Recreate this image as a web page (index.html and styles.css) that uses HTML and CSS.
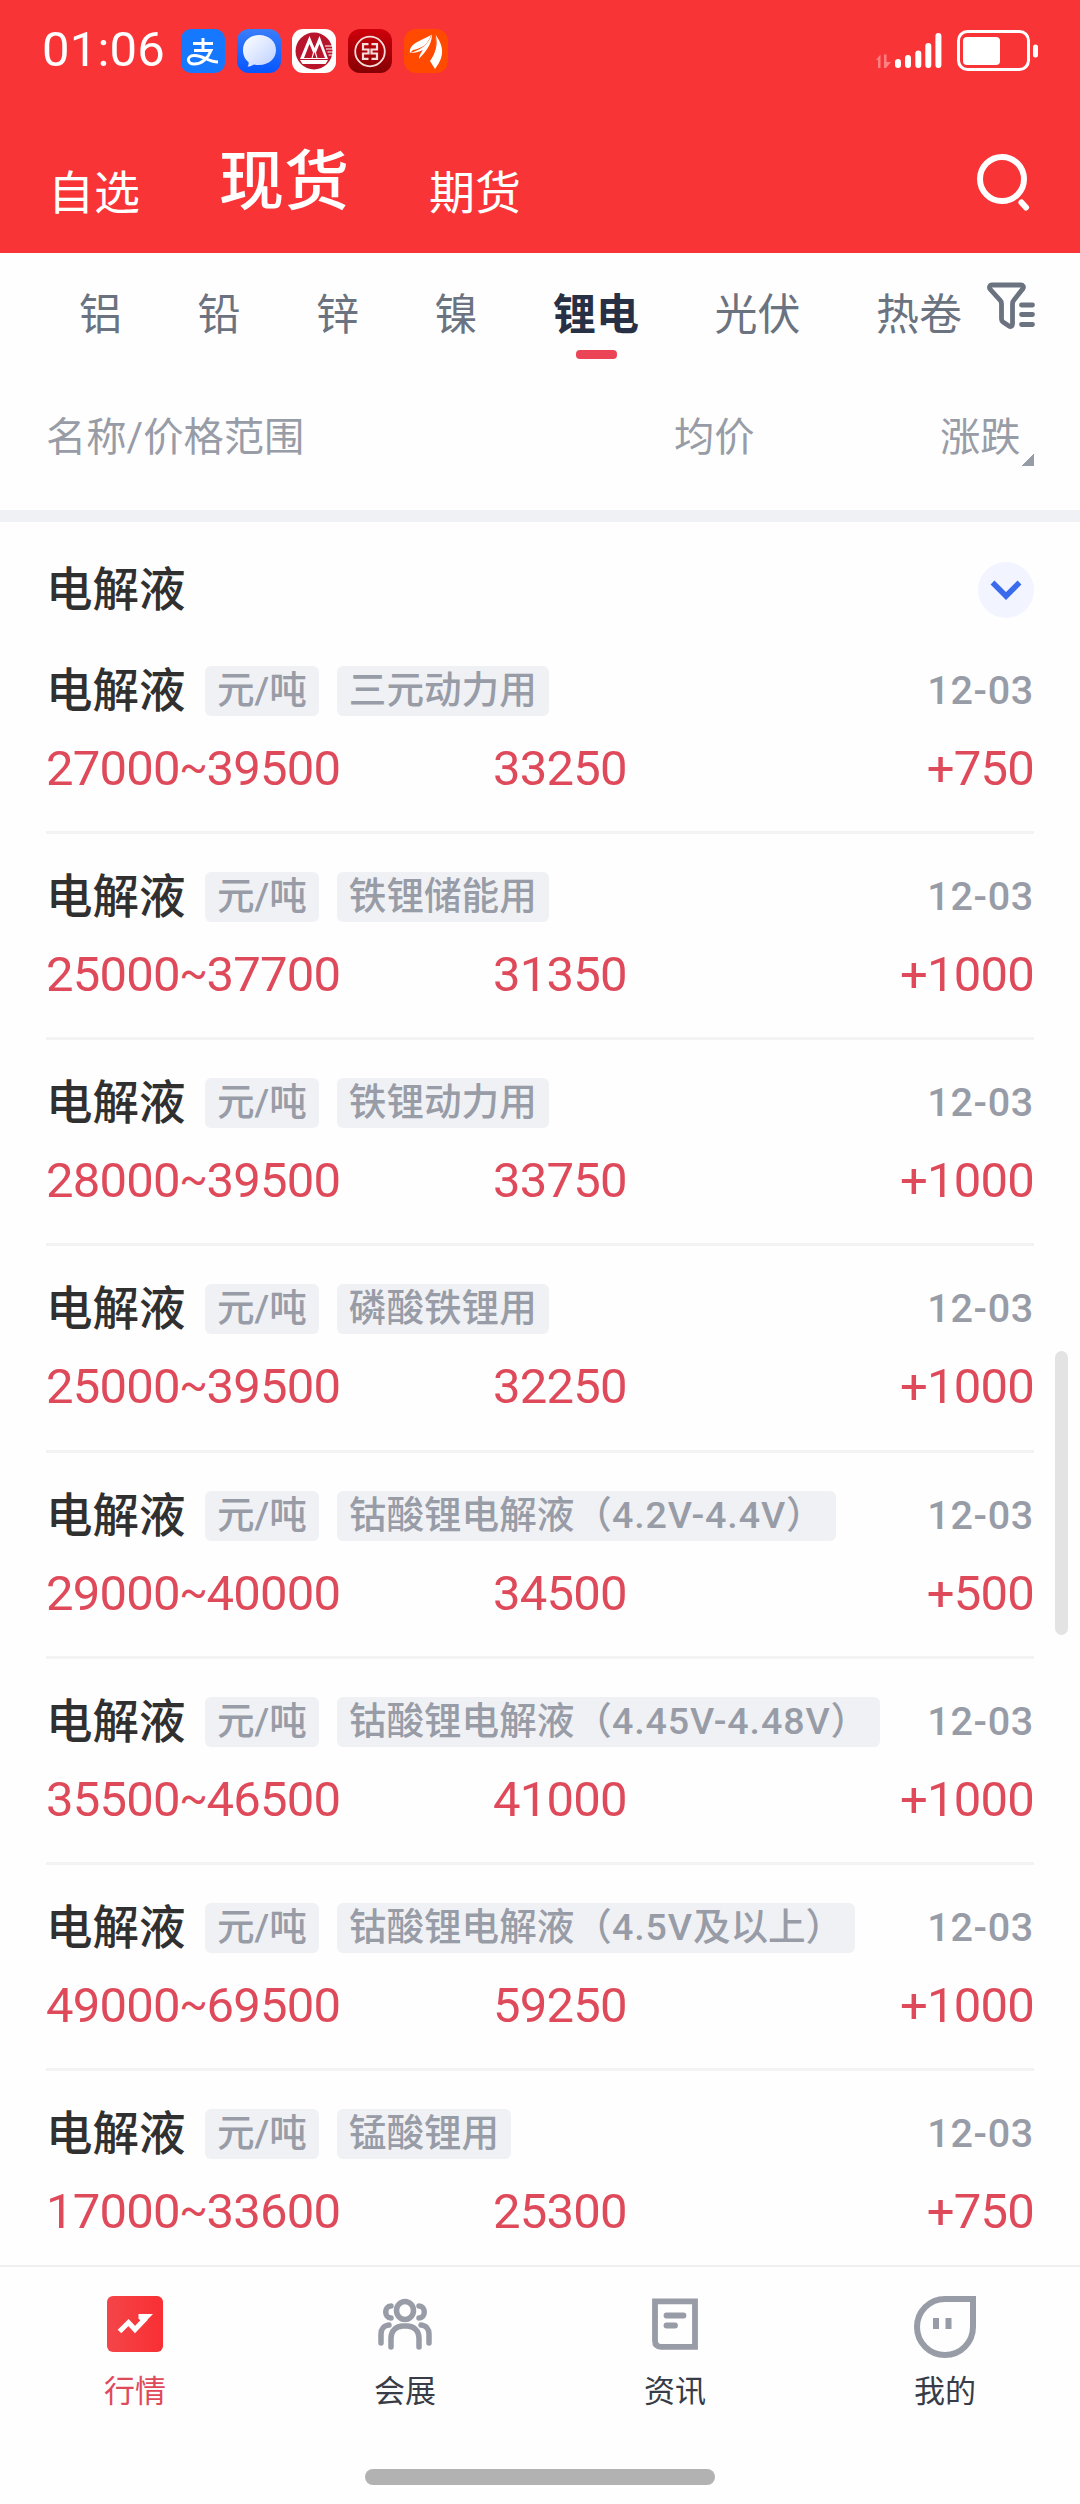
FILE: index.html
```html
<!DOCTYPE html>
<html lang="zh-CN">

<head>
    <meta charset="utf-8">
    <title>现货行情</title>
    <link rel="stylesheet" href="styles.css">
</head>

<body>
    <header class="header">
        <div class="status-bar">
            <span class="clock">01:06</span>
            <div class="notifications">
                <svg class="app-icon" viewBox="0 0 44 44">
                    <rect width="44" height="44" rx="10" fill="#1677ff" />
                    <path d="M12 14.500h20M22 9v12M13 21.500h17C27 29 21 35 13 35c-7 0-8-8 0-8.500C21 26 28 33 37 33" fill="none" stroke="#fff" stroke-width="3" />
                </svg>
                <svg class="app-icon" viewBox="0 0 44 44">
                    <defs>
                        <linearGradient id="msg-bg" x1="0" y1="0" x2="0" y2="1">
                            <stop offset="0" stop-color="#3a7df8" />
                            <stop offset="1" stop-color="#0556ff" />
                        </linearGradient>
                        <linearGradient id="msg-bubble" x1="0" y1="0" x2="1" y2="1">
                            <stop offset="0" stop-color="#fff" />
                            <stop offset="1" stop-color="#bccfff" />
                        </linearGradient>
                    </defs>
                    <rect width="44" height="44" rx="12" fill="url(#msg-bg)" />
                    <path d="M22 6c10 0 17 6.500 17 15s-7 15-17 15c-2 0-3.500-.3-5-.6-2 1.300-4 2-6.500 2.200 1-1.500 1.500-3 1-4.600C8 30.500 6 26 6 21 6 12.500 12.500 6 22 6z" fill="url(#msg-bubble)" />
                </svg>
                <svg class="app-icon" viewBox="0 0 44 44">
                    <rect width="44" height="44" rx="11" fill="#fff" />
                    <circle cx="22" cy="22" r="18.500" fill="#b8152c" />
                    <path d="M8 30 17.500 7l5 12 5-12L36 30z" fill="#fff" />
                    <path d="M17.500 15 12 29h7.500l1.500-5.500zM27.500 15 24 23.500l1.500 5.500H33zM22.500 23l-2 6h4z" fill="#b8152c" />
                    <path d="M8 31h28l-2.500 4h-23z" fill="#fff" />
                    <path d="M33 17h9M34 20h8M35.500 23h7M36.500 26h6" stroke="#fff" stroke-width="1.200" />
                </svg>
                <svg class="app-icon" viewBox="0 0 44 44">
                    <defs>
                        <linearGradient id="bank-bg" x1="0" y1="0" x2="0" y2="1">
                            <stop offset="0" stop-color="#cf000b" />
                            <stop offset="1" stop-color="#850004" />
                        </linearGradient>
                    </defs>
                    <rect width="44" height="44" rx="12" fill="url(#bank-bg)" />
                    <circle cx="22" cy="22.500" r="14.800" fill="none" stroke="#f7dcdc" stroke-width="1.800" />
                    <path d="M20.500 15.200H15v5.300h5.500v4H15v5.300h5.500M23.500 15.200H29v5.300h-5.500v4H29v5.300h-5.500" fill="none" stroke="#f7dcdc" stroke-width="2.200" />
                </svg>
                <svg class="app-icon" viewBox="0 0 44 44">
                    <rect width="44" height="44" rx="12" fill="#ff4a00" />
                    <path d="M6 24c-1-9 8-11 21-18-3 9-8 13-18 15z" fill="#fff" />
                    <path d="M6 24c11-3 18-8 22-19 0 11-7 18-13 25 0-4 2-6 4-9-4 2-8 3-13 3z" fill="#fff" />
                    <path d="M31 5c9 12 10 22 0 35l-5-8c6-8 7-16 5-27z" fill="#fff" />
                    <path d="M31 5c3 11 0 19-6 26" fill="none" stroke="#ff4a00" />
                </svg>
            </div>
            <svg class="signal" viewBox="0 0 66 44">
                <path d="M0 31l4.500-5.500V39H2V31zM8 25.500h2.500V33H15l-5 6H8z" fill="#ff7f82" />
                <path d="M22 33v3M32 29v7M42.300 24.500V36M52.300 17v19M62.400 7v29" stroke="#fff" stroke-width="6" stroke-linecap="round" />
            </svg>
            <svg class="battery" viewBox="0 0 82 42">
                <rect x="1.500" y="1.500" width="70" height="38" rx="9" fill="none" stroke="#fff" stroke-width="3" />
                <rect x="6" y="7" width="37" height="28" rx="4" fill="#fff" />
                <rect x="76" y="14.500" width="5" height="13" rx="2.500" fill="#fff" />
            </svg>
        </div>
        <nav class="market-nav">
            <a class="market">自选</a>
            <a class="market market-active">现货</a>
            <a class="market">期货</a>
            <svg class="search" viewBox="0 0 56 58">
                <circle cx="26" cy="26" r="22" fill="none" stroke="#fff" stroke-width="6" />
                <path d="M45.500 49.500l4.500 5" stroke="#fff" stroke-width="6" stroke-linecap="round" />
            </svg>
        </nav>
    </header>

    <nav class="metals">
        <a>铝</a>
        <a>铅</a>
        <a>锌</a>
        <a>镍</a>
        <a class="metal-active">锂电</a>
        <a>光伏</a>
        <a>热卷</a>
        <svg class="filter" viewBox="0 0 48 48">
            <path d="M5 3h29c2 0 3 2 2 3.500L27 18c-1 1-1.500 2-1.500 4v20c0 2.500-2 3-3.500 2l-6-4c-1-.7-1.500-1.500-1.500-3V22c0-2-.5-3-1.500-4L3 7C2 5.500 2.500 3 5 3z" fill="none" stroke="#6b7380" stroke-width="4.800" />
            <path d="M34.500 23h11M34.500 32.500h11M34.500 42.500h11" stroke="#6b7380" stroke-width="4.800" stroke-linecap="round" />
        </svg>
    </nav>

    <div class="columns">
        <span class="col-name">名称/价格范围</span>
        <span class="col-avg">均价</span>
        <span class="col-change">涨跌</span>
        <span class="sort-mark"></span>
    </div>

    <main class="list">
        <div class="group">
            <h2>电解液</h2>
            <svg class="collapse" viewBox="0 0 56 56">
                <circle cx="28" cy="28" r="28" fill="#f2f5ff" />
                <path d="M14.500 20.500 28 34l13.500-13.500" fill="none" stroke="#3a6bec" stroke-width="5.500" />
            </svg>
        </div>

        <section class="row">
            <div class="info"><h3>电解液</h3><span class="tag">元/吨</span><span class="tag">三元动力用</span><time>12-03</time></div>
            <div class="prices"><span class="range">27000<i>~</i>39500</span><span class="avg">33250</span><span class="change">+750</span></div>
        </section>
        <section class="row">
            <div class="info"><h3>电解液</h3><span class="tag">元/吨</span><span class="tag">铁锂储能用</span><time>12-03</time></div>
            <div class="prices"><span class="range">25000<i>~</i>37700</span><span class="avg">31350</span><span class="change">+1000</span></div>
        </section>
        <section class="row">
            <div class="info"><h3>电解液</h3><span class="tag">元/吨</span><span class="tag">铁锂动力用</span><time>12-03</time></div>
            <div class="prices"><span class="range">28000<i>~</i>39500</span><span class="avg">33750</span><span class="change">+1000</span></div>
        </section>
        <section class="row">
            <div class="info"><h3>电解液</h3><span class="tag">元/吨</span><span class="tag">磷酸铁锂用</span><time>12-03</time></div>
            <div class="prices"><span class="range">25000<i>~</i>39500</span><span class="avg">32250</span><span class="change">+1000</span></div>
        </section>
        <section class="row">
            <div class="info"><h3>电解液</h3><span class="tag">元/吨</span><span class="tag">钴酸锂电解液（<b>4.2V-4.4V</b>）</span><time>12-03</time></div>
            <div class="prices"><span class="range">29000<i>~</i>40000</span><span class="avg">34500</span><span class="change">+500</span></div>
        </section>
        <section class="row">
            <div class="info"><h3>电解液</h3><span class="tag">元/吨</span><span class="tag">钴酸锂电解液（<b>4.45V-4.48V</b>）</span><time>12-03</time></div>
            <div class="prices"><span class="range">35500<i>~</i>46500</span><span class="avg">41000</span><span class="change">+1000</span></div>
        </section>
        <section class="row">
            <div class="info"><h3>电解液</h3><span class="tag">元/吨</span><span class="tag">钴酸锂电解液（<b>4.5V</b>及以上）</span><time>12-03</time></div>
            <div class="prices"><span class="range">49000<i>~</i>69500</span><span class="avg">59250</span><span class="change">+1000</span></div>
        </section>
        <section class="row">
            <div class="info"><h3>电解液</h3><span class="tag">元/吨</span><span class="tag">锰酸锂用</span><time>12-03</time></div>
            <div class="prices"><span class="range">17000<i>~</i>33600</span><span class="avg">25300</span><span class="change">+750</span></div>
        </section>
        <div class="scrollbar"></div>
    </main>

    <footer class="tabbar">
        <nav class="tabs">
            <a class="tab tab-active">
                <svg viewBox="0 0 64 64">
                    <defs>
                        <linearGradient id="quote-bg">
                            <stop offset="0" stop-color="#f44549" />
                            <stop offset="1" stop-color="#f92f33" />
                        </linearGradient>
                    </defs>
                    <rect x="4" y="1" width="56" height="56" rx="6" fill="url(#quote-bg)" />
                    <path d="M16.500 36.500 25.500 27.500l6.500 7L43 23" fill="none" stroke="#fff" stroke-width="5" />
                    <path d="M35.500 19h14.500L40.500 28.500l-5-5z" fill="#fff" />
                </svg>
                行情
            </a>
            <a class="tab">
                <svg viewBox="0 0 64 64" fill="none" stroke="#989ca7" stroke-width="5.500" stroke-linecap="round">
                    <ellipse cx="32" cy="15.500" rx="8.500" ry="9" />
                    <path d="M18 52V43c0-7 5-12 12-12h4c7 0 12 5 12 12v9" />
                    <path d="M18 11c-7 0-7 12 0 12M46 11c7 0 7 12 0 12M16 30c-5 .5-8 4-8 9v9M48 30c5 .5 8 4 8 9v9" />
                </svg>
                会展
            </a>
            <a class="tab">
                <svg viewBox="0 0 64 64" fill="none" stroke="#989ca7" stroke-width="5.800">
                    <path d="M12 6.300h40v45.500H18c-4 0-6-2-6-6z" />
                    <path d="M23.500 20.500h17M23.500 30.500h8.500" stroke-linecap="round" />
                </svg>
                资讯
            </a>
            <a class="tab">
                <svg viewBox="0 0 64 64" fill="none" stroke="#989ca7" stroke-width="6">
                    <path d="M32 4h28v28A28 28 0 1 1 32 4z" />
                    <path d="M23 23v11M35.500 23v11" />
                </svg>
                我的
            </a>
        </nav>
        <div class="home-indicator"></div>
    </footer>
</body>

</html>
```
FILE: styles.css
```css
* {
    box-sizing: border-box;
}

body {
    margin: 0;
    width: 1080px;
    height: 2504px;
    display: flex;
    flex-direction: column;
    overflow: hidden;
    background: #fefefe;
    font-family: Roboto, "Noto Sans CJK SC", sans-serif;
    color: #303030;
}

svg {
    display: block;
    flex: none;
}

/* header */
.header {
    flex: none;
    height: 253px;
    background: #f83437;
    color: #fff;
}

.status-bar {
    display: flex;
    align-items: center;
    height: 102px;
    padding: 0 41px 0 42px;
}

.clock {
    width: 139px;
    font-size: 49px;
    letter-spacing: 0.2px;
    line-height: 56px;
    padding-bottom: 3px;
}

.notifications {
    display: flex;
    gap: 11.700px;
    margin-right: auto;
}

.app-icon {
    width: 44px;
    height: 44px;
}

.signal {
    width: 66px;
    height: 44px;
    margin-right: 15px;
}

.battery {
    width: 82px;
    height: 42px;
}

.market-nav {
    display: flex;
    align-items: flex-start;
    height: 151px;
    padding: 28px 48px 0;
}

.market {
    width: 171px;
    padding-top: 13px;
    font-size: 46px;
    line-height: 100px;
}

.market-active {
    width: 210px;
    padding-top: 2px;
    font-size: 65px;
    font-weight: 500;
}

.search {
    width: 56px;
    height: 58px;
    margin: 23px 0 0 auto;
}

/* metal tabs */
.metals {
    flex: none;
    display: flex;
    gap: 75.500px;
    height: 126px;
    padding-left: 79px;
    font-size: 43px;
    line-height: 125px;
    color: #6b7380;
}

.metals a {
    flex: none;
}

.metal-active {
    position: relative;
    font-weight: 700;
    color: #273045;
}

.metal-active::after {
    content: "";
    position: absolute;
    left: 23px;
    top: 97px;
    width: 41px;
    height: 9px;
    border-radius: 4px;
    background: #eb4456;
}

.filter {
    width: 48px;
    height: 48px;
    margin: 29px 0 0 -51px;
}

.columns {
    flex: none;
    display: flex;
    height: 143px;
    padding: 0 46px;
    border-bottom: 12px solid #f0f1f4;
    font-size: 40.300px;
    line-height: 118px;
    color: #989ca7;
}

.col-name {
    width: 628px;
}

.col-avg {
    width: 266px;
}

.sort-mark {
    width: 13px;
    height: 13px;
    margin: 74px 0 0 auto;
    background: linear-gradient(135deg, transparent 50%, #989ca7 50%);
}

/* price list */
.list {
    position: relative;
    flex: none;
    height: 1743px;
    padding: 0 46px;
    overflow: hidden;
}

.group {
    display: flex;
    justify-content: space-between;
    align-items: center;
    height: 106px;
    padding-top: 30px;
}

h2,
h3 {
    margin: 0;
    font-size: 46.500px;
    font-weight: 500;
    line-height: 50px;
}

.collapse {
    width: 56px;
    height: 56px;
}

.row {
    height: 206.150px;
    padding-top: 38px;
    border-bottom: 3px solid #f3f3f4;
}

.info {
    display: flex;
    height: 50px;
}

.info h3 {
    width: 159px;
}

.tag {
    margin-right: 18px;
    padding: 0 12px;
    border-radius: 6px;
    background: #f0f1f4;
    font-size: 37.600px;
    font-weight: 500;
    line-height: 49px;
    color: #989ca7;
    white-space: nowrap;
}

.tag b {
    font-weight: 500;
    letter-spacing: 0.900px;
}

time {
    margin-left: auto;
    font-size: 39.500px;
    font-weight: 500;
    line-height: 50px;
    letter-spacing: 0.700px;
    color: #989ca7;
}

.prices {
    display: flex;
    font-size: 49px;
    line-height: 106px;
    letter-spacing: -0.800px;
    color: #df4a5b;
}

.prices i {
    font-size: 42px;
    font-style: normal;
    line-height: 1;
    vertical-align: 4px;
    margin: 0 -0.500px;
}

.range {
    width: 447px;
}

.change {
    margin-left: auto;
}

.scrollbar {
    position: absolute;
    top: 829px;
    right: 12px;
    width: 13px;
    height: 284px;
    border-radius: 7px;
    background: #e3e3e3;
}

/* bottom bar */
.tabbar {
    flex: none;
    height: 239px;
    border-top: 2px solid #efefef;
}

.tabs {
    display: flex;
    height: 202px;
    padding-top: 28px;
}

.tab {
    flex: 1;
    display: flex;
    flex-direction: column;
    align-items: center;
    font-size: 31px;
    line-height: 66px;
    color: #373c47;
}

.tab svg {
    width: 64px;
    height: 64px;
}

.tab-active {
    color: #df4a5b;
}

.home-indicator {
    width: 350px;
    height: 16px;
    margin: 0 auto;
    border-radius: 8px;
    background: #b2b2b2;
}
```
